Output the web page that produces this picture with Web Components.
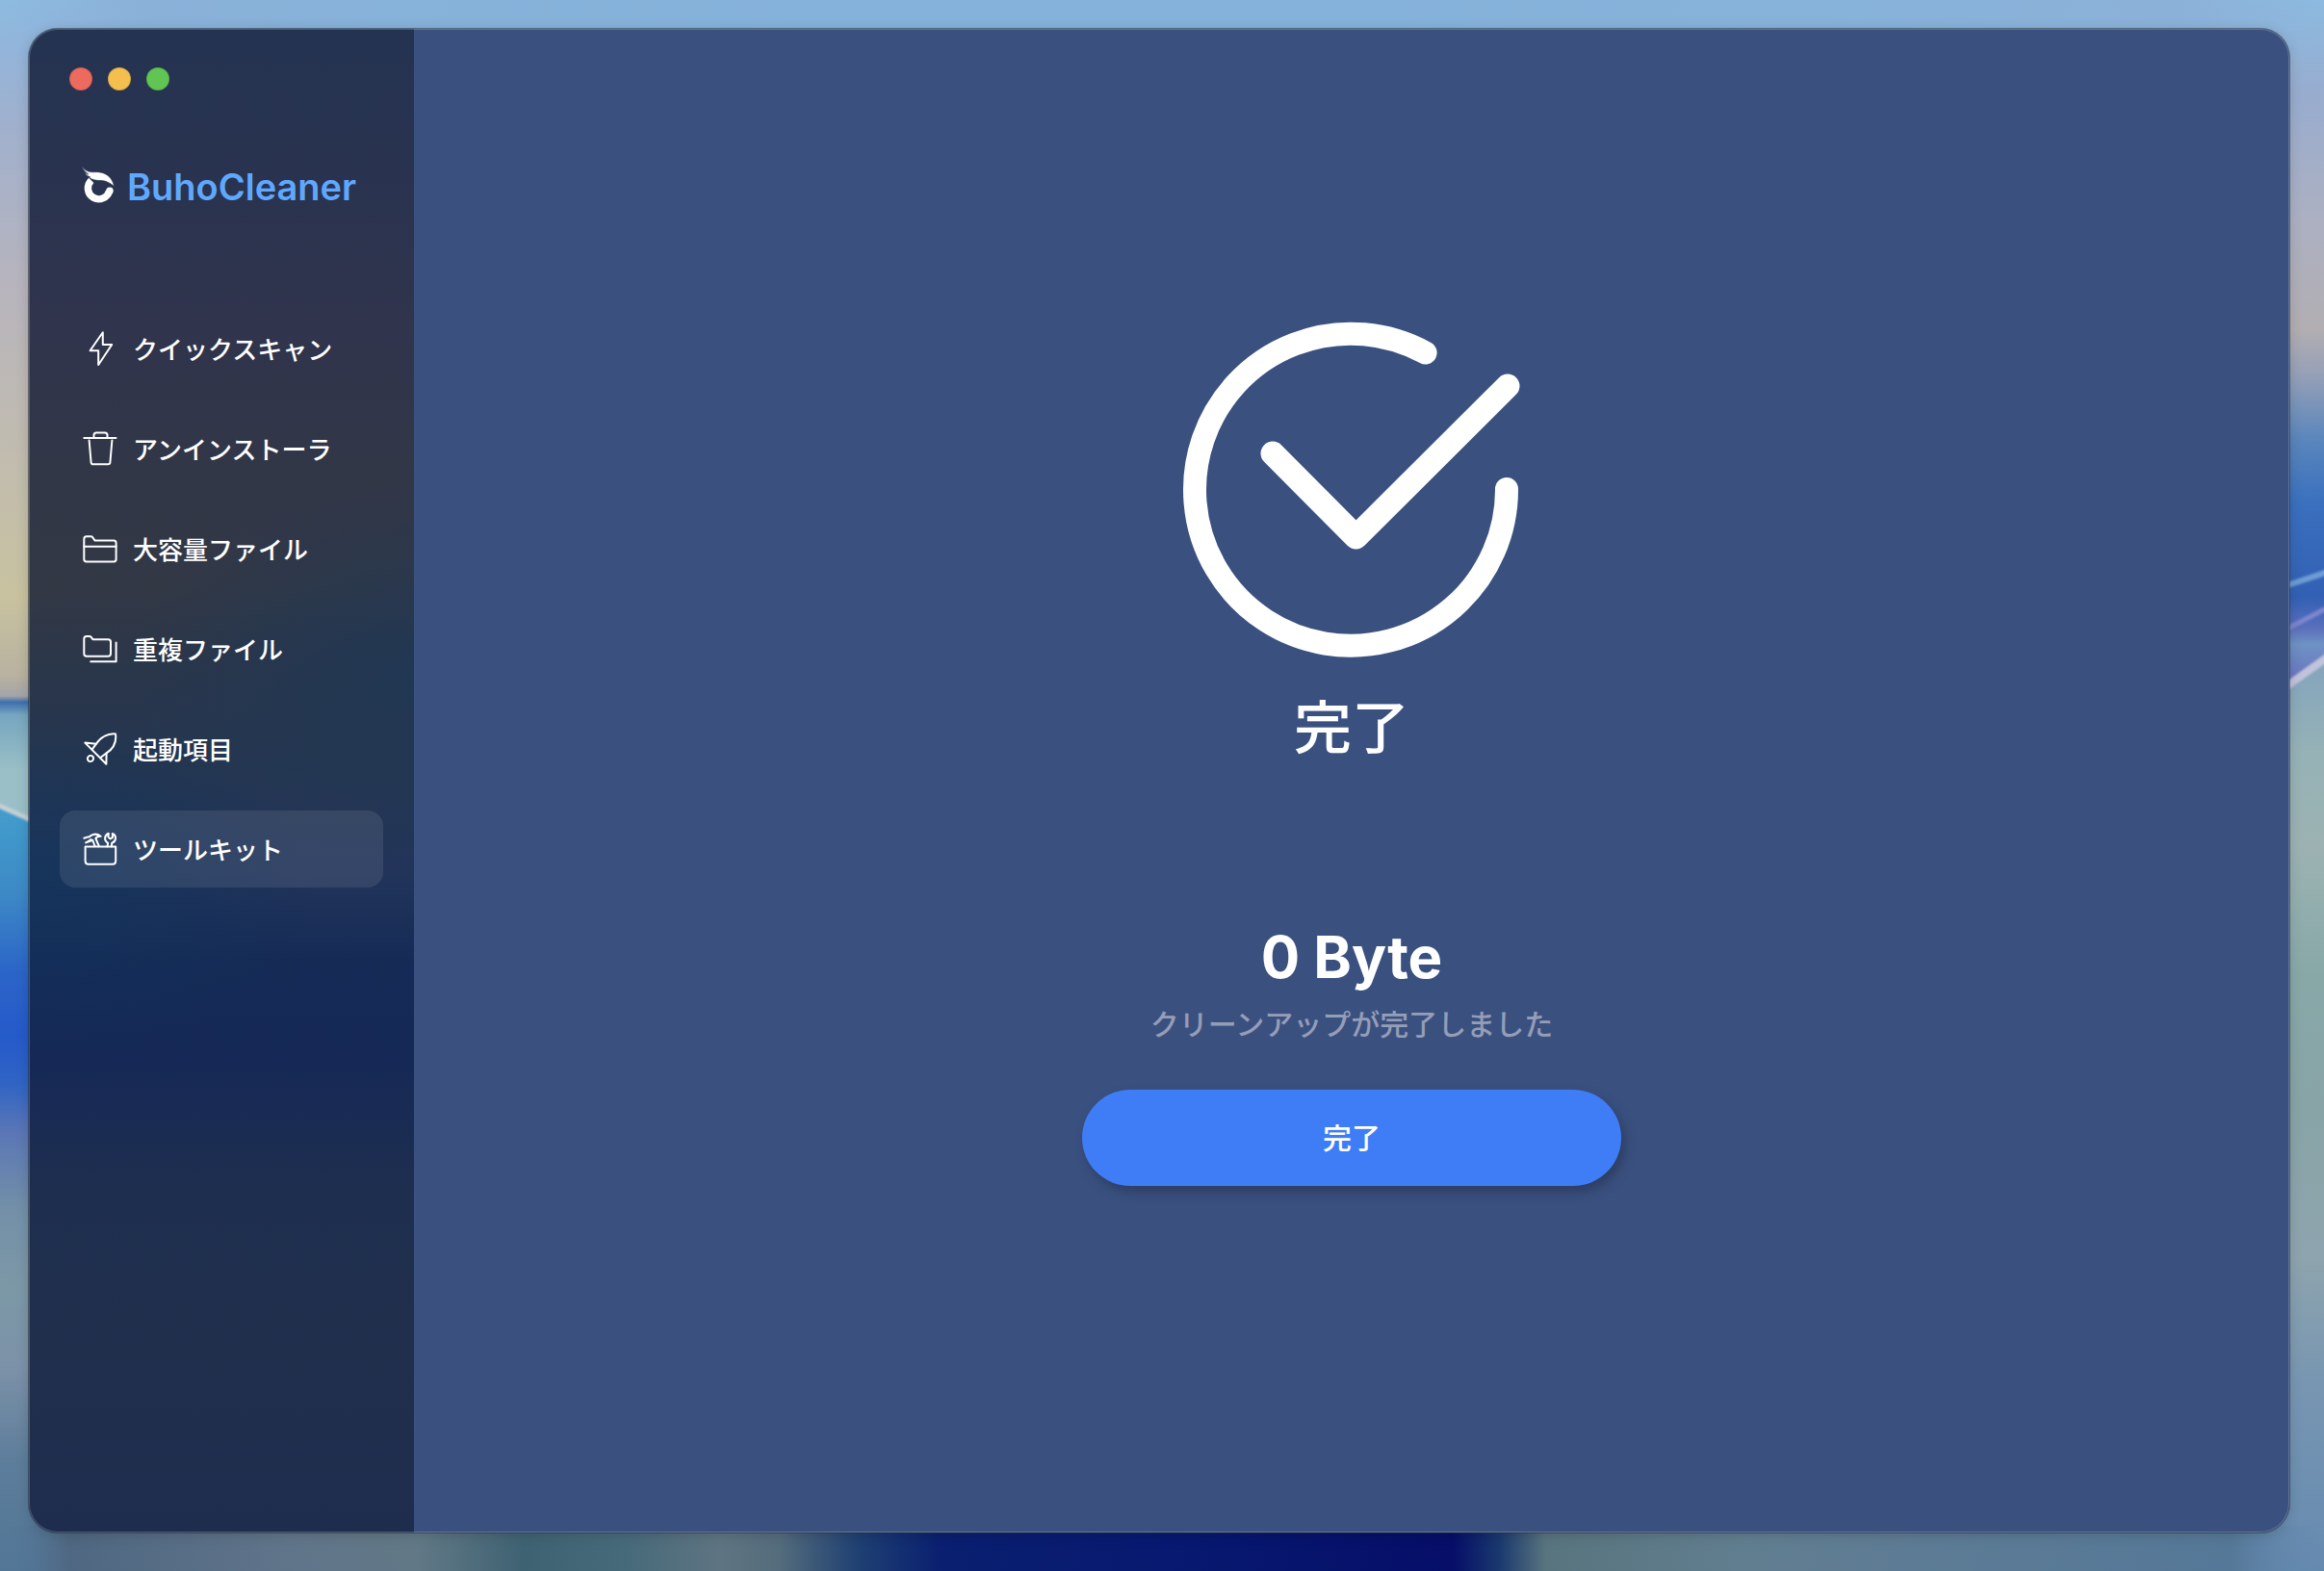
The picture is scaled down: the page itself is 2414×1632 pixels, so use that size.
<!DOCTYPE html>
<html lang="ja">
<head>
<meta charset="utf-8">
<meta name="viewport" content="width=device-width, initial-scale=1">
<title>BuhoCleaner</title>
<style>
    body {
        margin: 0;
        font-family: Inter, "Noto Sans CJK JP", sans-serif;
        color: #fff;
    }
</style>
</head>
<body>
<desk-top>
    <app-window>
        <side-bar slot="sidebar">
            <side-item icon="bolt">クイックスキャン</side-item>
            <side-item icon="trash">アンインストーラ</side-item>
            <side-item icon="folder">大容量ファイル</side-item>
            <side-item icon="folders">重複ファイル</side-item>
            <side-item icon="rocket">起動項目</side-item>
            <side-item icon="toolkit" selected>ツールキット</side-item>
        </side-bar>
        <result-view>
            <span slot="title">完了</span>
            <span slot="amount">0 Byte</span>
            <span slot="message">クリーンアップが完了しました</span>
            <pill-button slot="action">完了</pill-button>
        </result-view>
    </app-window>
</desk-top>

<script>
const icons = {
    bolt: `<path d="M20.8 1.2V14H30.2L16.2 35V20.3H7.6Z"/>`,
    trash: `
        <path d="M11.5 7V4Q11.5 1.5 14 1.5H23Q25.5 1.5 25.5 4V7M1.3 7H34.5"/>
        <path d="M6.6 9.5L8.6 32.4Q8.8 34.3 10.6 34.3H26.4Q28.2 34.3 28.4 32.4L30.4 9.5"/>`,
    folder: `
        <path d="M1.3 7.8Q1.3 5.3 3.8 5.3H8.4Q9.6 5.3 10.3 6.3L12.4 9.4H32.2Q34.6 9.4 34.6 12V29Q34.6 31.4 32.2 31.4H3.9Q1.3 31.4 1.3 29Z"/>
        <path d="M1.3 15.8H34.6"/>`,
    folders: `
        <path d="M1.3 7.5Q1.3 5 3.8 5H6.8Q8 5 8.7 5.9L10.4 8.2H26.4Q29 8.2 29 10.8V23.1Q29 25.7 26.4 25.7H3.9Q1.3 25.7 1.3 23.1Z"/>
        <path d="M34.6 11.5V31.2H8.2"/>`,
    rocket: `
        <path d="M2.3 11.6L13.8 12.8C18 7 24 1.6 34 2.4C35.4 12 30.4 18.6 24.6 22.4L24.4 33.8Z"/>
        <path d="M13.8 12.8L9.6 18.6M24.6 22.4L18 27.2"/>
        <ellipse cx="8" cy="28" rx="3.2" ry="3" transform="rotate(-45 8 28)"/>`,
    toolkit: `
        <path d="M2.6 15.6H34.2V30.6Q34.2 33.8 31 33.8H5.8Q2.6 33.8 2.6 30.6Z"/>
        <path d="M1.3 6.8L5.4 5.4Q6.8 5.6 8.2 4.2Q13.6 .8 18.6 4.8Q14.6 4.6 13.4 7L16.8 15M10.2 8.8L12.6 15M10.2 8.8Q8.2 7.2 6.8 9.4L3.2 11.4Z"/>
        <path d="M25.4 15.4L26.2 11.8Q22.6 9.6 23.2 5.8Q23.8 3 26.8 1.8L26.4 5.4L28.4 7.4L31 6L30.8 2Q34.4 3.6 34 7.2Q33.6 10.8 30.2 11.8L29.8 15.4"/>`
};

class DeskTop extends HTMLElement {
    constructor() {
        super();
        this.attachShadow({ mode: 'open' });
        this.shadowRoot.innerHTML = `
            <style>
                :host {
                    display: grid;
                    min-height: 100vh;
                    overflow: hidden;
                }
                svg, .space {
                    grid-area: 1 / 1;
                    min-width: 0;
                }
                svg {
                    width: 100%;
                    height: 100%;
                    max-height: 100vh;
                }
                .space {
                    box-sizing: border-box;
                    padding: 30px 36px 40px 30px;
                    display: grid;
                    z-index: 1;
                }
            </style>
            <svg viewBox="0 0 2414 1632" preserveAspectRatio="none" aria-hidden="true">
                <defs>
                    <linearGradient id="top" gradientUnits="userSpaceOnUse" x1="0" y1="0" x2="2414" y2="0">
                        <stop offset="0" stop-color="#8db5dc" stop-opacity="0"/>
                        <stop offset=".012" stop-color="#8db3da" stop-opacity=".3"/>
                        <stop offset=".06" stop-color="#8ab1d8"/>
                        <stop offset=".2" stop-color="#86b2da"/>
                        <stop offset=".5" stop-color="#84b2da"/>
                        <stop offset=".8" stop-color="#87b2da"/>
                        <stop offset=".94" stop-color="#8cb1d8"/>
                        <stop offset=".988" stop-color="#8db3da" stop-opacity=".3"/>
                        <stop offset="1" stop-color="#8db5dc" stop-opacity="0"/>
                    </linearGradient>
                    <linearGradient id="left" gradientUnits="userSpaceOnUse" x1="0" y1="0" x2="0" y2="1632">
                        <stop offset="0" stop-color="#8dbbe0"/>
                        <stop offset=".03" stop-color="#93b5da"/>
                        <stop offset=".08" stop-color="#a0b0cd"/>
                        <stop offset=".18" stop-color="#b7b4bd"/>
                        <stop offset=".28" stop-color="#c0bbb0"/>
                        <stop offset=".38" stop-color="#c8c2a0"/>
                        <stop offset=".43" stop-color="#b8b2a0"/>
                        <stop offset=".443" stop-color="#a5a5a8"/>
                        <stop offset=".447" stop-color="#3f6fae"/>
                        <stop offset=".455" stop-color="#76a6c0"/>
                        <stop offset=".49" stop-color="#9abfc6"/>
                        <stop offset=".51" stop-color="#9abfc6"/>
                    </linearGradient>
                    <linearGradient id="leftLow" gradientUnits="userSpaceOnUse" x1="0" y1="0" x2="0" y2="1632">
                        <stop offset=".52" stop-color="#419ccc"/>
                        <stop offset=".57" stop-color="#3d88c6"/>
                        <stop offset=".62" stop-color="#2b64c8"/>
                        <stop offset=".66" stop-color="#255aca"/>
                        <stop offset=".69" stop-color="#3064c4"/>
                        <stop offset=".72" stop-color="#5a76b6"/>
                        <stop offset=".77" stop-color="#7390a8"/>
                        <stop offset=".82" stop-color="#7c98a6"/>
                        <stop offset=".87" stop-color="#7c92a8"/>
                        <stop offset=".93" stop-color="#5d7d9b"/>
                        <stop offset="1" stop-color="#527696"/>
                    </linearGradient>
                    <linearGradient id="right" gradientUnits="userSpaceOnUse" x1="0" y1="0" x2="0" y2="1632">
                        <stop offset="0" stop-color="#8cbae0"/>
                        <stop offset=".06" stop-color="#98acce"/>
                        <stop offset=".14" stop-color="#acb0c2"/>
                        <stop offset=".21" stop-color="#b2aeb2"/>
                        <stop offset=".24" stop-color="#949fb8"/>
                        <stop offset=".28" stop-color="#5a86bc"/>
                        <stop offset=".32" stop-color="#3a70be"/>
                        <stop offset=".38" stop-color="#3260b4"/>
                        <stop offset=".4" stop-color="#5a70bc"/>
                        <stop offset=".41" stop-color="#6f92c4"/>
                        <stop offset=".43" stop-color="#6a78c0"/>
                    </linearGradient>
                    <linearGradient id="rightLow" gradientUnits="userSpaceOnUse" x1="0" y1="0" x2="0" y2="1632">
                        <stop offset=".43" stop-color="#86a6bc"/>
                        <stop offset=".48" stop-color="#96b2b6"/>
                        <stop offset=".54" stop-color="#9cb2b2"/>
                        <stop offset=".62" stop-color="#88a8a8"/>
                        <stop offset=".7" stop-color="#88a4a6"/>
                        <stop offset=".8" stop-color="#8ea4ae"/>
                        <stop offset=".88" stop-color="#7896b2"/>
                        <stop offset="1" stop-color="#658ab0"/>
                    </linearGradient>
                    <linearGradient id="bottom" gradientUnits="userSpaceOnUse" x1="0" y1="1600" x2="2414" y2="1600">
                        <stop offset="0" stop-color="#56799c" stop-opacity="0"/>
                        <stop offset=".03" stop-color="#4f6782"/>
                        <stop offset=".13" stop-color="#61758a"/>
                        <stop offset=".18" stop-color="#617886"/>
                        <stop offset=".225" stop-color="#3f6272"/>
                        <stop offset=".27" stop-color="#476a7a"/>
                        <stop offset=".31" stop-color="#5f7482"/>
                        <stop offset=".335" stop-color="#546c7c"/>
                        <stop offset=".37" stop-color="#1e3f72"/>
                        <stop offset=".405" stop-color="#0a1f70"/>
                        <stop offset=".5" stop-color="#071970"/>
                        <stop offset=".625" stop-color="#060e68"/>
                        <stop offset=".645" stop-color="#1a386e"/>
                        <stop offset=".665" stop-color="#58747e"/>
                        <stop offset=".75" stop-color="#617e90"/>
                        <stop offset=".82" stop-color="#5d7b94"/>
                        <stop offset=".96" stop-color="#557898"/>
                        <stop offset="1" stop-color="#658ab0" stop-opacity="0"/>
                    </linearGradient>
                    <filter id="soft" x="-50%" width="200%" y="-50%" height="200%">
                        <feGaussianBlur stdDeviation="1.2"/>
                    </filter>
                </defs>
                <path fill="url(#left)" d="M0 0H200V900H0Z"/>
                <path fill="url(#leftLow)" d="M0 838L60 866H200V1632H0Z"/>
                <path fill="url(#right)" d="M2200 0H2414V740H2200Z"/>
                <path fill="url(#rightLow)" d="M2200 734H2350L2414 686V1632H2200Z"/>
                <path fill="url(#top)" d="M0 0H2414V60H0Z"/>
                <path fill="url(#bottom)" d="M0 1585H2414V1632H0Z"/>
                <g fill="none" filter="url(#soft)">
                    <path stroke="#c4d0d6" stroke-width="5" d="M-10 833L60 864"/>
                    <path stroke="#6d9cd4" stroke-width="6" d="M2340 620L2424 592"/>
                    <path stroke="#7d86cc" stroke-width="5" d="M2340 672L2424 628"/>
                    <path stroke="#c2c2dc" stroke-width="8" d="M2340 738L2424 678"/>
                </g>
            </svg>
            <div class="space"><slot></slot></div>
        `;
    }
}

class AppWindow extends HTMLElement {
    constructor() {
        super();
        this.attachShadow({ mode: 'open' });
        this.shadowRoot.innerHTML = `
            <style>
                :host {
                    display: grid;
                    grid-template-columns: 400px 1fr;
                    border-radius: 30px;
                    background-color: #3a5180;
                    overflow: hidden;
                    box-shadow: 0 0 0 1px rgba(40, 50, 60, .55), 0 2px 14px rgba(0, 0, 0, .16);
                    position: relative;
                }
                /* light hairline round the inner edge */
                :host::after {
                    content: "";
                    position: absolute;
                    inset: 0;
                    border-radius: 30px;
                    box-shadow: inset 0 0 0 1px rgba(255, 255, 255, .2);
                    pointer-events: none;
                }
            </style>
            <slot name="sidebar"></slot>
            <slot></slot>
        `;
    }
}

class SideBar extends HTMLElement {
    constructor() {
        super();
        this.attachShadow({ mode: 'open' });
        this.shadowRoot.innerHTML = `
            <style>
                :host {
                    display: flex;
                    flex-direction: column;
                    padding: 40px 32px;
                    background:
                        radial-gradient(300px 180px at 0 57%, rgba(14, 52, 92, .6), transparent),
                        radial-gradient(300px 200px at 100% 43%, rgba(32, 55, 84, .9), transparent),
                        linear-gradient(#243352, #29334f 10%, #30344d 19%, #313648 28%, #333845 37%, #2a364a 43%, #253650 49%, #22345a 56%, #152b56 62%, #152856 68%, #192b54 72%, #1e2e4f 77%, #202f4c 87%, #1e2d4e);
                }
                .controls {
                    display: flex;
                    gap: 16px;
                    padding: 0 10px;
                }
                .controls button {
                    width: 24px;
                    height: 24px;
                    padding: 0;
                    border: 1px solid rgba(0, 0, 0, .12);
                    border-radius: 50%;
                }
                .close { background: #ed6a5e; }
                .minimize { background: #f5bf4f; }
                .zoom { background: #61c554; }
                .brand {
                    display: flex;
                    align-items: center;
                    gap: 12px;
                    margin: 76px 0 104px;
                    padding-left: 22px;
                    font-size: 38px;
                    line-height: 48px;
                    font-weight: 600;
                    color: #5fa8ff;
                }
                .brand svg {
                    width: 36px;
                    height: 40px;
                    overflow: visible;
                }
                nav {
                    display: flex;
                    flex-direction: column;
                    gap: 24px;
                }
            </style>
            <div class="controls">
                <button class="close" aria-label="閉じる"></button>
                <button class="minimize" aria-label="しまう"></button>
                <button class="zoom" aria-label="拡大"></button>
            </div>
            <div class="brand">
                <svg viewBox="0 2 36 40" aria-hidden="true">
                    <path fill="none" stroke="#fff" stroke-width="7.4" d="M10.8 15.4A11.3 11.3 0 1 0 29.6 26.4"/>
                    <circle cx="30" cy="26.2" r="3.7" fill="#fff"/>
                    <path fill="#fff" stroke="#2a3450" stroke-width=".6" d="M.8 .6C4 5 8 7.2 13 6.8C22 5.8 31.8 9 34.6 21.4C29 17.4 26.5 16 21.5 15.5C16 15.6 11.5 15 7.4 11.8L10 12.2C7 10.9 5.4 9.4 4.2 7.4L7.8 9C4.4 6.8 2.4 4 .8 .6Z"/>
                </svg>
                <span>BuhoCleaner</span>
            </div>
            <nav><slot></slot></nav>
        `;
    }
}

class SideItem extends HTMLElement {
    constructor() {
        super();
        this.attachShadow({ mode: 'open' });
    }

    connectedCallback() {
        this.shadowRoot.innerHTML = `
            <style>
                :host {
                    display: block;
                }
                a {
                    display: flex;
                    align-items: center;
                    gap: 16px;
                    height: 80px;
                    padding: 0 24px;
                    border-radius: 16px;
                    color: inherit;
                    font-size: 26px;
                    line-height: 40px;
                    font-weight: 500;
                    text-decoration: none;
                    white-space: nowrap;
                }
                :host([selected]) a {
                    background-color: rgba(255, 255, 255, .09);
                }
                svg {
                    width: 36px;
                    height: 36px;
                    flex: none;
                    fill: none;
                    stroke: #fff;
                    stroke-width: 2;
                    stroke-linejoin: round;
                    stroke-linecap: round;
                }
                span {
                    padding-top: 4px;
                }
            </style>
            <a href="#">
                <svg viewBox="0 0 36 36" aria-hidden="true">${icons[this.getAttribute('icon')]}</svg>
                <span><slot></slot></span>
            </a>
        `;
    }
}

class ResultView extends HTMLElement {
    constructor() {
        super();
        this.attachShadow({ mode: 'open' });
        this.shadowRoot.innerHTML = `
            <style>
                :host {
                    display: flex;
                    flex-direction: column;
                    align-items: center;
                    justify-content: center;
                    padding-bottom: 58px;
                }
                svg {
                    width: 352px;
                    height: 352px;
                    fill: none;
                    stroke: #fff;
                    stroke-width: 24;
                    stroke-linecap: round;
                    stroke-linejoin: round;
                }
                h1, p {
                    margin: 0;
                }
                h1 {
                    margin-top: 36px;
                    font-size: 60px;
                    line-height: 72px;
                    font-weight: 500;
                }
                .amount {
                    margin-top: 164px;
                    font-size: 60px;
                    line-height: 76px;
                    font-weight: 700;
                }
                .message {
                    margin: 10px 0 46px;
                    font-size: 30px;
                    line-height: 44px;
                    font-weight: 500;
                    color: #959db7;
                }
            </style>
            <svg viewBox="0 0 352 352" aria-hidden="true">
                <path d="M252.6 34.5A162 162 0 1 0 337 176"/>
                <path stroke-width="25" d="M94 139L180.5 226L338 69"/>
            </svg>
            <h1><slot name="title"></slot></h1>
            <p class="amount"><slot name="amount"></slot></p>
            <p class="message"><slot name="message"></slot></p>
            <slot name="action"></slot>
        `;
    }
}

class PillButton extends HTMLElement {
    constructor() {
        super();
        this.attachShadow({ mode: 'open' });
        this.shadowRoot.innerHTML = `
            <style>
                :host {
                    display: block;
                }
                button {
                    width: 560px;
                    height: 100px;
                    padding: 0 0 4px;
                    border: none;
                    border-radius: 50px;
                    background-color: #3f7df7;
                    box-shadow: 4px 6px 12px rgba(30, 35, 60, .45);
                    color: #fff;
                    font: inherit;
                    font-size: 30px;
                    font-weight: 500;
                    cursor: pointer;
                }
            </style>
            <button><slot></slot></button>
        `;
    }
}

window.customElements.define('desk-top', DeskTop);
window.customElements.define('app-window', AppWindow);
window.customElements.define('side-bar', SideBar);
window.customElements.define('side-item', SideItem);
window.customElements.define('result-view', ResultView);
window.customElements.define('pill-button', PillButton);
</script>
</body>
</html>
